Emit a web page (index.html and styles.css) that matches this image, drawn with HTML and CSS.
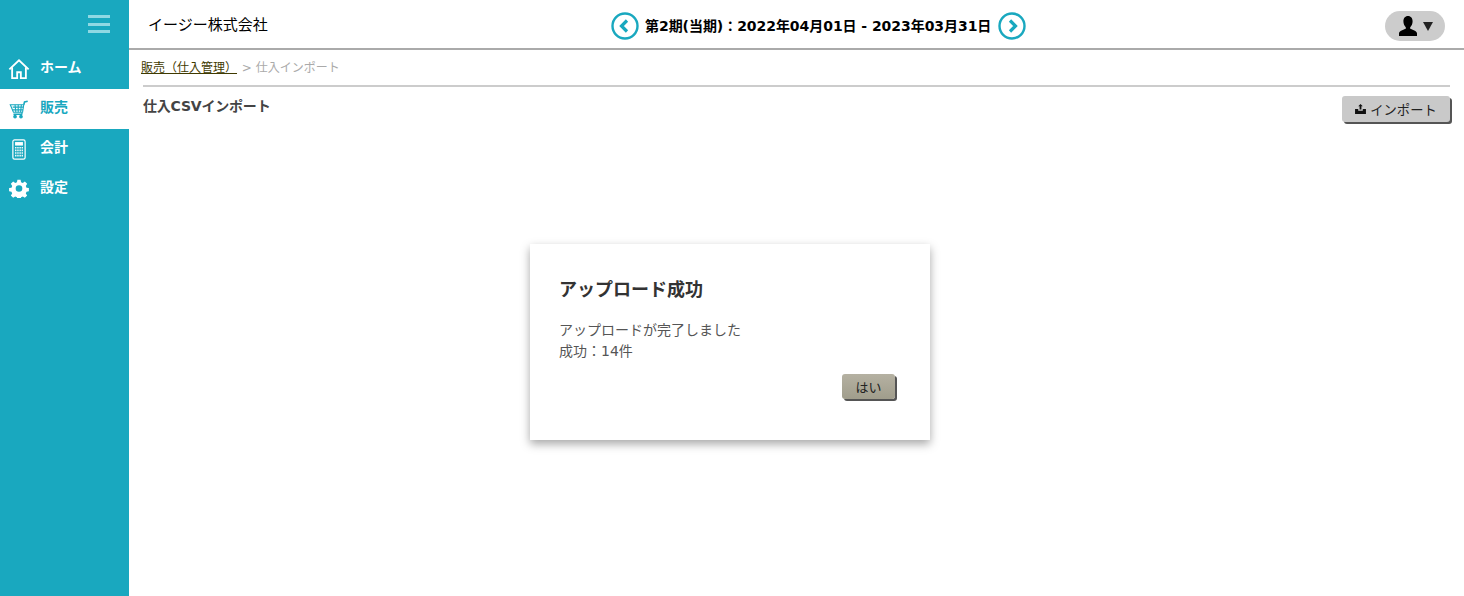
FILE: index.html
```html
<!DOCTYPE html>
<html lang="ja">
<head>
    <meta charset="UTF-8">
    <meta name="viewport" content="width=device-width, initial-scale=1.0">
    <title>仕入CSVインポート</title>
    <link rel="stylesheet" href="styles.css">
</head>
<body>

<div class="layout">
    <nav class="sidebar">
        <div class="sidebar-top">
            <button class="menu-toggle" aria-label="メニュー">
                <span></span><span></span><span></span>
            </button>
        </div>
        <a class="nav-item">
            <svg class="nav-icon" viewBox="0 0 24 24" width="24" height="22" fill="none" stroke="currentColor" stroke-width="2">
                <path d="M1.500 12.500 L12 2.500 L22.500 12.500"/>
                <path d="M4.500 10 V22 H10 V15.500 H14 V22 H19.500 V10"/>
            </svg>
            <span>ホーム</span>
        </a>
        <a class="nav-item">
            <svg class="nav-icon" viewBox="0 0 24 24" width="24" height="19" fill="none" stroke="currentColor" stroke-width="1.400">
                <path d="M1 6 H18 L16.500 15.500 H5 Z"/>
                <path d="M18 6 L19 2.500 L23 1.500" stroke-width="2"/>
                <path d="M4 9 H17.500 M4 12.500 H17 M7 6 L8 15.500 M11 6 V15.500 M15 6 L14 15.500"/>
                <path d="M16 15.500 L15.500 18 H5" stroke-width="1.600"/>
                <circle cx="7" cy="21" r="1.600" fill="currentColor"/>
                <circle cx="14.500" cy="21" r="1.600" fill="currentColor"/>
            </svg>
            <span>販売</span>
        </a>
        <a class="nav-item">
            <svg class="nav-icon" viewBox="0 0 24 24" width="24" height="21">
                <rect x="5" y="1" width="14" height="22" rx="2" fill="none" stroke="currentColor" stroke-width="1.400"/>
                <rect x="7.500" y="3.500" width="9" height="4" fill="currentColor"/>
                <path d="M7.500 10 H16.500 M7.500 13 H16.500 M7.500 16 H16.500 M7.500 19 H16.500" stroke="currentColor" stroke-width="1.800" stroke-dasharray="1.600 .9"/>
            </svg>
            <span>会計</span>
        </a>
        <a class="nav-item">
            <svg class="nav-icon nav-icon-gear" viewBox="0 0 24 24" width="24" height="19">
                <path fill="currentColor" fill-rule="evenodd" d="M10 1h4l.6 3 2.200.9 2.600-1.700 2.900 2.900-1.700 2.600.9 2.200 3 .6v4l-3 .6-.9 2.200 1.700 2.600-2.900 2.900-2.600-1.700-2.200.9-.6 3h-4l-.6-3-2.200-.9-2.600 1.700-2.900-2.900 1.700-2.600-.9-2.200-3-.6v-4l3-.6.9-2.200-1.700-2.600 2.900-2.900 2.600 1.700 2.200-.9z M12 7.800a4.200 4.200 0 1 0 0 8.400 4.200 4.200 0 0 0 0-8.400z"/>
            </svg>
            <span>設定</span>
        </a>
    </nav>

    <div class="main">
        <header class="topbar">
            <div class="company">イージー株式会社</div>
            <div class="period">
                <button class="period-btn" aria-label="前期">
                    <svg viewBox="0 0 28 28" width="28" height="28" fill="none" stroke="#19a8bf">
                        <circle cx="14" cy="14" r="12.500" stroke-width="2.400"/>
                        <path d="M16 8.500 L10.500 14 L16 19.500" stroke-width="3.200"/>
                    </svg>
                </button>
                <span class="period-text">第2期(当期)：2022年04月01日 - 2023年03月31日</span>
                <button class="period-btn" aria-label="次期">
                    <svg viewBox="0 0 28 28" width="28" height="28" fill="none" stroke="#19a8bf">
                        <circle cx="14" cy="14" r="12.500" stroke-width="2.400"/>
                        <path d="M12 8.500 L17.500 14 L12 19.500" stroke-width="3.200"/>
                    </svg>
                </button>
            </div>
            <button class="user-btn" aria-label="ユーザー">
                <svg viewBox="0 0 18 19" width="18" height="20" preserveAspectRatio="none">
                    <path fill="#000" d="M9 0c3 0 4.600 2.200 4.600 5 0 2.400-1 4.500-2.400 5.600v1.400c2 .9 6.800 2 6.800 4.500V19H0v-2.500c0-2.500 4.800-3.600 6.800-4.500v-1.400C5.400 9.500 4.400 7.400 4.400 5 4.400 2.200 6 0 9 0z"/>
                </svg>
                <span class="caret"></span>
            </button>
        </header>

        <div class="content">
            <div class="breadcrumb">
                <a class="crumb-link">販売（仕入管理）</a>
                <span class="crumb-sep">&gt;</span>
                <span class="crumb-current">仕入インポート</span>
            </div>
            <div class="page-head">
                <h1>仕入CSVインポート</h1>
                <button class="import-btn">
                    <svg viewBox="0 0 12 11" width="11" height="10">
                        <path fill="#111" d="M6 0 L8.500 2.500 H7 V6 H5 V2.500 H3.500 Z M0 5.500 H3.500 V7.500 H8.500 V5.500 H12 V11 H0 Z"/>
                    </svg>
                    インポート
                </button>
            </div>
        </div>
    </div>
</div>

<div class="dialog">
    <h2>アップロード成功</h2>
    <p>アップロードが完了しました<br>成功：14件</p>
    <div class="dialog-actions">
        <button class="ok-btn">はい</button>
    </div>
</div>

</body>
</html>
```

FILE: styles.css
```css
* {
    box-sizing: border-box;
}

html, body {
    height: 100%;
}

body {
    margin: 0;
    font-family: "DejaVu Sans", "Noto Sans CJK JP", sans-serif;
    background-color: #fff;
    color: #333;
    overflow: hidden;
    text-spacing-trim: space-all;
}

button {
    font-family: inherit;
    cursor: pointer;
}

.layout {
    display: flex;
    height: 100%;
}

/* Sidebar */
.sidebar {
    width: 129px;
    flex-shrink: 0;
    background-color: #19a8bf;
    color: #fff;
}
.sidebar-top {
    height: 49px;
    display: flex;
    justify-content: flex-end;
    padding: 15px 19px 0 0;
}
.menu-toggle {
    width: 22px;
    height: 18px;
    padding: 0;
    border: 0;
    background: none;
    display: flex;
    flex-direction: column;
    justify-content: space-between;
}
.menu-toggle span {
    display: block;
    height: 3px;
    background-color: #8fd8e3;
}
.nav-item {
    display: flex;
    align-items: center;
    height: 40px;
    padding-left: 7px;
    font-size: 14px;
    font-weight: bold;
    color: #fff;
}
.nav-item:nth-child(3) {
    background-color: #fff;
    color: #19a8bf;
}
.nav-item span {
    margin-left: 9px;
    position: relative;
    top: -3px;
}
.nav-icon {
    flex-shrink: 0;
}
.nav-icon-gear {
    margin-bottom: 2px;
}

/* Header */
.main {
    flex: 1;
    min-width: 0;
}
.topbar {
    height: 50px;
    display: grid;
    grid-template-columns: 463px auto 1fr;
    align-items: center;
    padding: 4px 19px 0 19px;
    border-bottom: 2px solid #aaa;
}
.company {
    font-size: 15px;
    color: #000;
    margin-bottom: 6px;
}
.period {
    display: flex;
    align-items: center;
    gap: 6px;
}
.period-text {
    font-size: 14px;
    font-weight: bold;
    color: #000;
    letter-spacing: -0.05px;
    margin-right: 1px;
    margin-bottom: 3px;
}
.period-btn {
    padding: 0;
    border: 0;
    background: none;
    display: flex;
}
.user-btn {
    justify-self: end;
    width: 60px;
    height: 30px;
    border: 0;
    border-radius: 15px;
    background-color: #ccc;
    display: flex;
    align-items: center;
    gap: 6px;
    padding: 0 0 0 14px;
}
.caret {
    width: 0;
    height: 0;
    border-left: 5px solid transparent;
    border-right: 5px solid transparent;
    border-top: 9px solid #222;
}

/* Content */
.content {
    padding: 0 14px;
}
.breadcrumb {
    height: 35px;
    padding: 9px 0 0 0;
    margin-left: -2px;
    font-size: 12px;
    line-height: 18px;
    white-space: nowrap;
}
.crumb-link {
    color: #3f3a00;
    text-decoration: underline;
}
.crumb-sep {
    color: #aaa;
    margin-left: 1px;
}
.crumb-current {
    color: #aaa;
}
.page-head {
    display: flex;
    justify-content: space-between;
    align-items: flex-start;
    border-top: 2px solid #ccc;
}
.page-head h1 {
    margin: 9px 0 0 0;
    font-size: 14px;
    line-height: 20px;
    font-weight: bold;
    color: #444;
    letter-spacing: -0.2px;
}
.import-btn {
    margin-top: 9px;
    width: 108px;
    height: 26px;
    border: 0;
    border-radius: 3px;
    background-color: #c9c9c9;
    box-shadow: 2px 2px 0 #555;
    font-size: 13.3px;
    color: #222;
    display: flex;
    align-items: center;
    justify-content: center;
    gap: 4px;
    padding: 0;
}

/* Dialog */
.dialog {
    position: absolute;
    left: 530px;
    top: 244px;
    width: 400px;
    height: 196px;
    padding: 31px 30px 30px 29px;
    background-color: #fff;
    box-shadow: 0 4px 9px rgba(0, 0, 0, 0.35);
}
.dialog h2 {
    margin: 0;
    font-size: 18px;
    line-height: 30px;
    font-weight: bold;
    color: #333;
}
.dialog p {
    margin: 15px 0 0 0;
    font-size: 14px;
    line-height: 21px;
    color: #555;
}
.dialog-actions {
    display: flex;
    justify-content: flex-end;
    margin-top: 12px;
    padding-right: 5px;
}
.ok-btn {
    width: 53px;
    height: 25px;
    padding: 0;
    border: 0;
    border-radius: 3px;
    background: linear-gradient(#b5b1a2, #a09d8c);
    box-shadow: 2px 2px 0 #555;
    font-size: 13px;
    color: #222;
}
```
